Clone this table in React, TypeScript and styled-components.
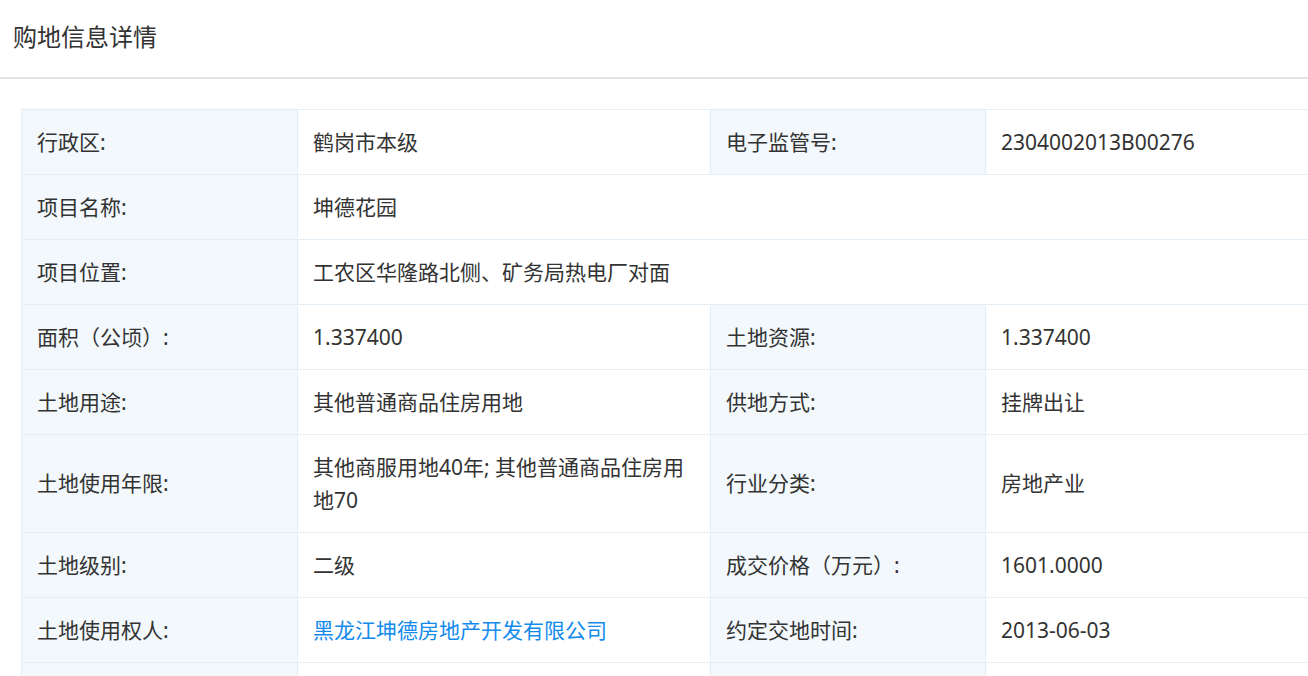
import React from "react";
import styled, { createGlobalStyle } from "styled-components";

const GlobalStyle = createGlobalStyle`
  html, body {
    margin: 0;
    padding: 0;
    background: #ffffff;
    font-family: "Noto Sans", "Noto Sans CJK SC", sans-serif;
    color: #333333;
  }
`;

const Page = styled.div`
  width: 100%;
  overflow: hidden;
`;

const Header = styled.div`
  height: 77px;
  display: flex;
  align-items: center;
  padding-left: 13px;
  border-bottom: 2px solid #e3e3e3;
  box-sizing: content-box;
`;

const Title = styled.h1`
  margin: 0;
  font-size: 24px;
  font-weight: 400;
  color: #333333;
  line-height: 32px;
  margin-top: -3px;
`;

const Body = styled.div`
  padding: 30px 0 0 21px;
`;

const Table = styled.table`
  border-collapse: collapse;
  table-layout: fixed;
  width: 1310px;
  font-size: 21px;
  line-height: 32.5px;
`;

const Cell = styled.td<{ $label?: boolean }>`
  border: 1px solid #e4eef6;
  padding: 16px 15px 15.5px;
  height: 64px;
  box-sizing: border-box;
  vertical-align: middle;
  color: #333333;
  background: ${(p) => (p.$label ? "#f2f8fc" : "#ffffff")};
  word-break: break-all;
`;

const Link = styled.a`
  color: #128bed;
  text-decoration: none;
`;

type Row = { l1?: string; v1?: React.ReactNode; l2?: string; v2?: React.ReactNode };

const rows: Row[] = [
  { l1: "行政区:", v1: "鹤岗市本级", l2: "电子监管号:", v2: "2304002013B00276" },
  { l1: "项目名称:", v1: "坤德花园" },
  { l1: "项目位置:", v1: "工农区华隆路北侧、矿务局热电厂对面" },
  { l1: "面积（公顷）:", v1: "1.337400", l2: "土地资源:", v2: "1.337400" },
  { l1: "土地用途:", v1: "其他普通商品住房用地", l2: "供地方式:", v2: "挂牌出让" },
  {
    l1: "土地使用年限:",
    v1: "其他商服用地40年; 其他普通商品住房用地70",
    l2: "行业分类:",
    v2: "房地产业",
  },
  { l1: "土地级别:", v1: "二级", l2: "成交价格（万元）:", v2: "1601.0000" },
  {
    l1: "土地使用权人:",
    v1: <Link href="#">黑龙江坤德房地产开发有限公司</Link>,
    l2: "约定交地时间:",
    v2: "2013-06-03",
  },
  { l2: " " },
];

export default function App() {
  return (
    <Page>
      <GlobalStyle />
      <Header>
        <Title>购地信息详情</Title>
      </Header>
      <Body>
        <Table>
          <colgroup>
            <col style={{ width: 276 }} />
            <col style={{ width: 413 }} />
            <col style={{ width: 275 }} />
            <col style={{ width: 346 }} />
          </colgroup>
          <tbody>
            {rows.map((r, i) => (
              <tr key={i}>
                <Cell $label>{r.l1}</Cell>
                {r.l2 !== undefined ? (
                  <>
                    <Cell>{r.v1}</Cell>
                    <Cell $label>{r.l2}</Cell>
                    <Cell>{r.v2}</Cell>
                  </>
                ) : (
                  <Cell colSpan={3}>{r.v1}</Cell>
                )}
              </tr>
            ))}
          </tbody>
        </Table>
      </Body>
    </Page>
  );
}
